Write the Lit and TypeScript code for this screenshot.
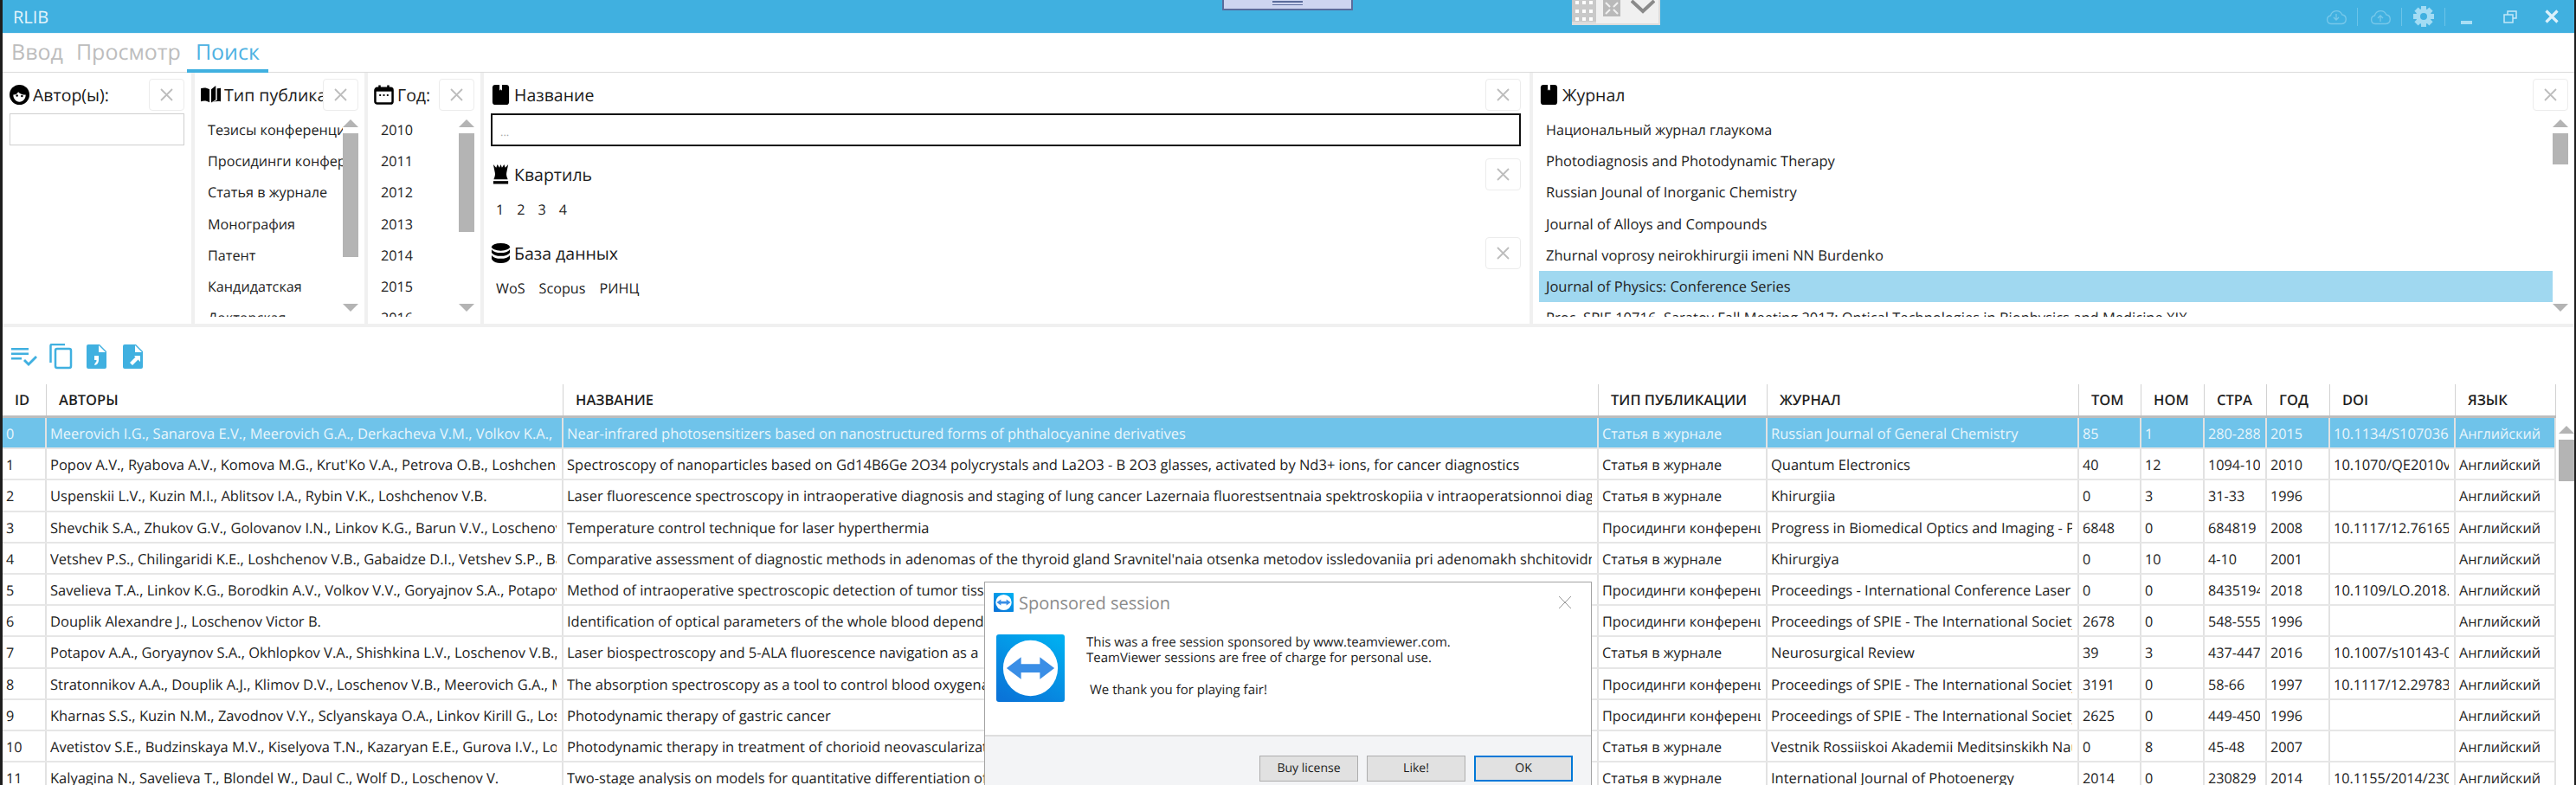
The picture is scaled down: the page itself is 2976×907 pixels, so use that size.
import {LitElement, html, css, svg} from 'lit';
import {customElement} from 'lit/decorators.js';

const TYPES = ['Тезисы конференции', 'Просидинги конференций', 'Статья в журнале', 'Монография', 'Патент', 'Кандидатская', 'Докторская'];
const YEARS = ['2010', '2011', '2012', '2013', '2014', '2015', '2016'];
const JOURNALS = [
    'Национальный журнал глаукома',
    'Photodiagnosis and Photodynamic Therapy',
    'Russian Jounal of Inorganic Chemistry',
    'Journal of Alloys and Compounds',
    'Zhurnal voprosy neirokhirurgii imeni NN Burdenko',
    'Journal of Physics: Conference Series',
    'Proc. SPIE 10716, Saratov Fall Meeting 2017: Optical Technologies in Biophysics and Medicine XIX',
];
const COLUMNS = ['ID', 'АВТОРЫ', 'НАЗВАНИЕ', 'ТИП ПУБЛИКАЦИИ', 'ЖУРНАЛ', 'ТОМ', 'НОМ', 'СТРА', 'ГОД', 'DOI', 'ЯЗЫК'];
const ARTICLE = 'Статья в журнале';
const PROC = 'Просидинги конференций';
const SPIE = 'Proceedings of SPIE - The International Society for Optical Engineering';
const ROWS = [
    ['0', 'Meerovich I.G., Sanarova E.V., Meerovich G.A., Derkacheva V.M., Volkov K.A., Negrimovsky V.M.', 'Near-infrared photosensitizers based on nanostructured forms of phthalocyanine derivatives', ARTICLE, 'Russian Journal of General Chemistry', '85', '1', '280-288', '2015', '10.1134/S1070363215020036'],
    ['1', "Popov A.V., Ryabova A.V., Komova M.G., Krut'Ko V.A., Petrova O.B., Loshchenov V.B.", 'Spectroscopy of nanoparticles based on Gd14B6Ge 2O34 polycrystals and La2O3 - B 2O3 glasses, activated by Nd3+ ions, for cancer diagnostics', ARTICLE, 'Quantum Electronics', '40', '12', '1094-1098', '2010', '10.1070/QE2010v040n12'],
    ['2', 'Uspenskii L.V., Kuzin M.I., Ablitsov I.A., Rybin V.K., Loshchenov V.B.', 'Laser fluorescence spectroscopy in intraoperative diagnosis and staging of lung cancer Lazernaia fluorestsentnaia spektroskopiia v intraoperatsionnoi diagnostike', ARTICLE, 'Khirurgiia', '0', '3', '31-33', '1996', ''],
    ['3', 'Shevchik S.A., Zhukov G.V., Golovanov I.N., Linkov K.G., Barun V.V., Loschenov V.B.', 'Temperature control technique for laser hyperthermia', PROC, 'Progress in Biomedical Optics and Imaging - Proceedings of SPIE', '6848', '0', '684819', '2008', '10.1117/12.761650'],
    ['4', 'Vetshev P.S., Chilingaridi K.E., Loshchenov V.B., Gabaidze D.I., Vetshev S.P., Bannikov A.', "Comparative assessment of diagnostic methods in adenomas of the thyroid gland Sravnitel'naia otsenka metodov issledovaniia pri adenomakh shchitovidnoi", ARTICLE, 'Khirurgiya', '0', '10', '4-10', '2001', ''],
    ['5', 'Savelieva T.A., Linkov K.G., Borodkin A.V., Volkov V.V., Goryajnov S.A., Potapov A.A.', 'Method of intraoperative spectroscopic detection of tumor tissue', PROC, 'Proceedings - International Conference Laser', '0', '0', '8435194', '2018', '10.1109/LO.2018.8435194'],
    ['6', 'Douplik Alexandre J., Loschenov Victor B.', 'Identification of optical parameters of the whole blood dependence', PROC, SPIE, '2678', '0', '548-555', '1996', ''],
    ['7', 'Potapov A.A., Goryaynov S.A., Okhlopkov V.A., Shishkina L.V., Loschenov V.B., Savelieva T.A.', 'Laser biospectroscopy and 5-ALA fluorescence navigation as a', ARTICLE, 'Neurosurgical Review', '39', '3', '437-447', '2016', '10.1007/s10143-016-0'],
    ['8', 'Stratonnikov A.A., Douplik A.J., Klimov D.V., Loschenov V.B., Meerovich G.A., Meerovich I.G.', 'The absorption spectroscopy as a tool to control blood oxygenation', PROC, SPIE, '3191', '0', '58-66', '1997', '10.1117/12.297832'],
    ['9', 'Kharnas S.S., Kuzin N.M., Zavodnov V.Y., Sclyanskaya O.A., Linkov Kirill G., Loschenov V.B.', 'Photodynamic therapy of gastric cancer', PROC, SPIE, '2625', '0', '449-450', '1996', ''],
    ['10', 'Avetistov S.E., Budzinskaya M.V., Kiselyova T.N., Kazaryan E.E., Gurova I.V., Loschenov V.B.', 'Photodynamic therapy in treatment of chorioid neovascularization', ARTICLE, 'Vestnik Rossiiskoi Akademii Meditsinskikh Nauk', '0', '8', '45-48', '2007', ''],
    ['11', 'Kalyagina N., Savelieva T., Blondel W., Daul C., Wolf D., Loschenov V.', 'Two-stage analysis on models for quantitative differentiation of', ARTICLE, 'International Journal of Photoenergy', '2014', '0', '230829', '2014', '10.1155/2014/230829'],
];

const faceIcon = svg`<circle cx="12" cy="12" r="12" fill="#000"/><path d="M4.500 12c3 0 5-1.500 6-3.500 2 2.300 5.500 3.500 9 3.500 0 4.800-3.200 8.500-7.500 8.500S4.500 16.800 4.500 12z" fill="#fff"/><circle cx="9" cy="13" r="1.300"/><circle cx="15" cy="13.500" r="1.300"/>`;
const bookIcon = svg`<path d="M0 4.500c3.500-1.300 7-1 10.500 1V21c-3.500-2-7-2.300-10.500-1z"/><path d="M12.500 5.500 18 1v17l-5.500 3.500z"/><path d="M19.500 4.500 24 4v16c-3.500-.6-7-.3-10 1l5.500-2.500z"/>`;
const calendarIcon = svg`<rect x="1.500" y="4" width="21" height="18.500" rx="2.500" fill="#fff" stroke="#000" stroke-width="2.600"/><rect x="1.500" y="4" width="21" height="4" fill="#000"/><rect x="5.500" y="0.500" width="2.600" height="5"/><rect x="15.900" y="0.500" width="2.600" height="5"/><rect x="6.500" y="11.500" width="2" height="2"/><rect x="11" y="11.500" width="2" height="2"/><rect x="15.500" y="11.500" width="2" height="2"/>`;
const bookmarkIcon = svg`<rect x="2" y="0" width="20" height="24" rx="3.500"/><path d="M10.500 0h3v7l-1.500-1.500L10.500 7z" fill="#fff"/>`;
const queenIcon = svg`<path d="M3 0l3.500 4L8 0l2.500 4L12 0l1.500 4L16 0l1.500 4L21 0l-2 10c-.5 2.500 0 4.500 1.500 8h-17c1.500-3.500 2-5.500 1.500-8z"/><rect x="3" y="20" width="18" height="3.500"/>`;
const dbIcon = svg`<ellipse cx="12" cy="4.500" rx="11" ry="4.500"/><path d="M1 7.500c2 3 6 4 11 4s9-1 11-4v4c-2 3-6 4-11 4s-9-1-11-4z"/><path d="M1 14.500c2 3 6 4 11 4s9-1 11-4v4.500c-2 3.500-6 5-11 5s-9-1.500-11-5z"/>`;

@customElement('app-root')
export class AppRoot extends LitElement {
    static styles = css`
        :host {
            display: block;
            width: 2976px;
            height: 907px;
            overflow: hidden;
            background: #fff;
            color: #222;
            font-family: 'Open Sans', 'Noto Sans', sans-serif;
            font-size: 16.200px;
            text-rendering: geometricPrecision;
        }

        .lat { font-size: 16.500px; }

        .app {
            position: relative;
            height: 907px;
            box-sizing: border-box;
            border-left: 3px solid #1e1e1e;
            border-right: 2px solid #1e1e1e;
            display: flex;
            flex-direction: column;
            overflow: hidden;
        }

        .titlebar {
            height: 38px;
            flex: none;
            background: #40b0e0;
            display: flex;
            align-items: center;
            padding-left: 12px;
            color: #e4f4fb;
            font-size: 20px;
            border-bottom: 1px solid #e8f4fa;
            box-sizing: content-box;
        }

        .win-icons {
            margin-left: auto;
            display: flex;
            align-items: center;
            height: 38px;
            padding-right: 18px;
        }

        .win-icons svg { display: block; flex: none; }
        .win-sep { width: 1px; height: 21px; background: #6cc3e8; flex: none; }

        .tv-top {
            position: absolute;
            left: 1409px;
            top: 0;
            width: 147px;
            height: 10px;
            background: #cdd5f0;
            border: 2px solid #5a6c9c;
            border-top: none;
            display: flex;
            justify-content: center;
        }

        .tv-top i {
            display: block;
            width: 35px;
            height: 5px;
            margin-top: 1px;
            border-top: 2px solid #5a6c9c;
            border-bottom: 1px solid #5a6c9c;
            box-sizing: border-box;
        }

        .tv-bar {
            position: absolute;
            left: 1813px;
            top: 0;
            width: 102px;
            height: 29px;
            background: #dcdcdc;
            display: flex;
            box-sizing: border-box;
            padding-bottom: 2px;
            padding-right: 2px;
        }

        .tv-grip {
            width: 28px;
            background: #c9c9c9;
            display: grid;
            grid-template-columns: repeat(3, 4px);
            gap: 4px;
            padding: 0 4px;
            height: 25px;
            box-sizing: border-box;
            flex: none;
        }

        .tv-grip b { background: #fff; height: 4px; display: block; margin-top: 1px; }

        .tv-rest {
            flex: 1;
            background: #f0f0f0;
            display: flex;
            gap: 12px;
            padding-left: 8px;
        }

        .tabs {
            height: 45px;
            flex: none;
            box-sizing: border-box;
            display: flex;
            border-bottom: 1px solid #dcdcdc;
            padding-left: 3px;
            color: #bdbdbd;
            font-size: 25px;
        }

        .tab {
            padding: 0 7px;
            margin-right: 1px;
            height: 44px;
            line-height: 42px;
            box-sizing: border-box;
        }

        .tab.active {
            color: #4fb2e2;
            border-bottom: 4px solid #40b0e0;
            padding: 0 10px;
            margin-left: -1px;
            height: 45px;
            margin-bottom: -1px;
        }

        .filters {
            height: 294px;
            flex: none;
            display: grid;
            grid-template-columns: 218px 196px 130px 1208px 1203px;
            gap: 4px;
            background: #f0f0f0;
            padding-bottom: 4px;
            box-sizing: border-box;
        }

        .panel {
            background: #fff;
            padding: 7px 8px 0;
            min-width: 0;
            overflow: hidden;
            display: flex;
            flex-direction: column;
        }

        .panel.tight { padding-left: 7px; padding-right: 7px; }
        .panel.name { padding-right: 10px; }

        .head {
            display: flex;
            align-items: center;
            height: 37px;
            flex: none;
            font-size: 19.500px;
            color: #1a1a1a;
        }

        .head svg { width: 23px; height: 23px; flex: none; margin-right: 4px; }

        .head-title {
            flex: 1;
            min-width: 0;
            overflow: hidden;
            white-space: nowrap;
        }

        .clear {
            width: 41px;
            height: 37px;
            flex: none;
            box-sizing: border-box;
            border: 1.500px solid #ececec;
            border-radius: 4px;
            color: #bdbdbd;
            display: flex;
            align-items: center;
            justify-content: center;
        }

        .clear svg { width: 15px; height: 15px; margin: 0; }

        .input {
            height: 37px;
            margin-top: 3px;
            flex: none;
            border: 1px solid #cfcfcf;
            box-sizing: border-box;
        }

        .input.focus {
            border: 2px solid #111;
            color: #aaa;
            font-size: 13px;
            padding: 10px 0 0 9px;
            height: 38px;
        }

        .subhead { margin-top: 14px; }

        .chips {
            display: flex;
            gap: 15px;
            height: 24px;
            line-height: 24px;
            margin: 10px 0 20px 6px;
        }

        .chips.wide { gap: 16px; margin-bottom: 0; }

        .list-wrap {
            display: flex;
            flex: 1;
            min-height: 0;
            margin-top: 4px;
        }

        .list {
            flex: 1;
            min-width: 0;
            overflow: hidden;
            height: 234px;
        }

        .item {
            height: 36.2px;
            line-height: 36px;
            padding-left: 8px;
            white-space: nowrap;
        }

        .item.selected { background: #a0d8f0; }

        .bar {
            width: 18px;
            flex: none;
            display: flex;
            flex-direction: column;
            align-items: center;
            box-sizing: border-box;
            padding: 6px 0 14px;
        }

        .up, .down {
            width: 0;
            height: 0;
            flex: none;
            border-left: 9px solid transparent;
            border-right: 9px solid transparent;
        }

        .up { border-bottom: 9px solid #b4b4b4; }
        .down { border-top: 9px solid #b4b4b4; margin-top: auto; }
        .thumb { width: 100%; background: #b4b4b4; margin-top: 7px; flex: none; }

        .toolbar {
            height: 66px;
            flex: none;
            display: flex;
            gap: 14px;
            padding: 19px 0 0 10px;
            box-sizing: border-box;
            color: #40b0e0;
        }

        .toolbar svg { display: block; flex: none; }

        .grid-wrap {
            flex: 1;
            min-height: 0;
            display: flex;
        }

        .table {
            width: 2950px;
            flex: none;
            --cols: 51px 597px 1196px 195px 360px 72px 73px 72px 73px 145px 116px;
        }

        .thead {
            display: grid;
            grid-template-columns: var(--cols);
            height: 39px;
            border-bottom: 3px solid #bdbdbd;
            box-sizing: border-box;
        }

        .th {
            font-weight: 600;
            font-size: 16.500px;
            line-height: 36px;
            padding-left: 14px;
            color: #1f1f1f;
            border-right: 1px solid #d2d2d2;
            white-space: nowrap;
            overflow: hidden;
        }

        .row {
            display: grid;
            grid-template-columns: var(--cols);
            height: 36.2px;
            box-sizing: border-box;
            border-bottom: 2px solid #e6e6e6;
        }

        .row.selected { background: #6fc3ea; color: #e9f6fc; }

        .td {
            border-right: 2px solid #e2e2e2;
            padding: 2px 6px 0 4px;
            line-height: 32px;
            min-width: 0;
        }

        .clip { overflow: hidden; white-space: nowrap; }

        .grid-bar {
            width: 18px;
            margin-left: 3px;
            flex: none;
            display: flex;
            flex-direction: column;
            align-items: center;
            padding-top: 48px;
        }

        .grid-bar .thumb { height: 48px; margin-top: 7px; }

        .dialog {
            position: absolute;
            left: 1134px;
            top: 672px;
            width: 702px;
            height: 240px;
            background: #fff;
            border: 1px solid #a3a3a3;
            box-sizing: border-box;
            display: flex;
            flex-direction: column;
            color: #1c1c1c;
            font-size: 15px;
        }

        .dlg-title {
            height: 46px;
            flex: none;
            display: flex;
            align-items: center;
            padding: 0 16px 0 10px;
            color: #8b8b8b;
            font-size: 20px;
        }

        .dlg-title svg { flex: none; display: block; margin-right: 6px; }
        .dlg-close { margin-left: auto; margin-right: 0; }

        .dlg-body {
            height: 130px;
            flex: none;
            box-sizing: border-box;
            display: flex;
            padding: 14px 0 0 13px;
            line-height: 18px;
        }

        .dlg-logo { flex: none; display: block; margin-right: 25px; }
        .dlg-text p { margin: 0; }
        .dlg-text .thanks { margin: 19px 0 0 4px; }

        .dlg-foot {
            flex: 1;
            background: #f3f4f6;
            border-top: 2px solid #dedede;
            display: flex;
            justify-content: flex-end;
            gap: 10px;
            padding: 22px 21px 0 0;
        }

        .btn {
            width: 114px;
            height: 30px;
            box-sizing: border-box;
            background: #e1e1e1;
            border: 1px solid #adadad;
            font-size: 14px;
            text-align: center;
            line-height: 28px;
        }

        .btn.primary {
            border: 2px solid #0078d7;
            line-height: 26px;
        }
    `;

    // latin text runs narrower than the original ui font, so it gets a larger size
    private latClass(text: string) {
        return /[A-Za-z]/.test(text) && !/[А-Яа-я]/.test(text) ? 'lat' : '';
    }

    private glyph(body: unknown) {
        return html`<svg viewBox="0 0 24 24" fill="#000">${body}</svg>`;
    }

    private clearBtn() {
        return html`<div class="clear"><svg viewBox="0 0 15 15"><path d="M1 1l13 13M14 1L1 14" stroke="currentColor" stroke-width="1.800" fill="none"/></svg></div>`;
    }

    private head(icon: unknown, title: string) {
        return html`<div class="head">${this.glyph(icon)}<div class="head-title">${title}</div>${this.clearBtn()}</div>`;
    }

    private listPanel(items: string[], thumb: number, selected = -1) {
        return html`
            <div class="list-wrap">
                <div class="list">
                    ${items.map((t, i) => html`<div class="item ${this.latClass(t)} ${i === selected ? 'selected' : ''}">${t}</div>`)}
                </div>
                <div class="bar">
                    <div class="up"></div>
                    <div class="thumb" style="height: ${thumb}px"></div>
                    <div class="down"></div>
                </div>
            </div>
        `;
    }

    private cloud(arrowUp: boolean) {
        const arrow = arrowUp ? 'M12 18v-7M9 14l3-3 3 3' : 'M12 9v7M9 13l3 3 3-3';
        return html`<svg width="24" height="24" viewBox="0 0 24 24" fill="none" stroke="#77c8ea" stroke-width="1.300">
            <path d="M6 20.500a4.800 4.800 0 0 1-.5-9.500 7 7 0 0 1 13.300-1 5.300 5.300 0 0 1-.3 10.500z"/>
            <path d=${arrow}/>
        </svg>`;
    }

    private gear() {
        const teeth = [0, 45, 90, 135, 180, 225, 270, 315];
        return html`<svg width="24" height="24" viewBox="0 0 24 24" fill="#a3dcf4">
            ${teeth.map((a) => svg`<rect x="9" y="0" width="6" height="6" transform="rotate(${a} 12 12)"/>`)}
            <circle cx="12" cy="12" r="6.500" fill="none" stroke="#a3dcf4" stroke-width="5"/>
        </svg>`;
    }

    private winIcons() {
        return html`
            <div class="win-icons">
                ${this.cloud(false)}
                <div class="win-sep" style="margin: 0 14px 0 12px"></div>
                ${this.cloud(true)}
                <div class="win-sep" style="margin: 0 13px 0 12px"></div>
                ${this.gear()}
                <div class="win-sep" style="margin: 0 18px 0 12px"></div>
                <svg width="14" height="6" style="margin-top: 14px"><rect width="13" height="4" y="1" fill="#a9dff5"/></svg>
                <svg width="16" height="15" viewBox="0 0 16 15" style="margin-left: 35px" fill="none" stroke="#c3e7f7" stroke-width="1.500">
                    <rect x="1" y="5" width="10" height="9"/><path d="M5 5V1h10v8h-4"/>
                </svg>
                <svg width="16" height="16" viewBox="0 0 16 16" style="margin-left: 32px" stroke="#dbf1fb" stroke-width="3.200">
                    <path d="M1.500 1.500l13 13M14.500 1.500l-13 13"/>
                </svg>
            </div>
        `;
    }

    private tvLogo(w: number, h: number, mini: boolean) {
        return html`<svg class="dlg-logo" width=${w} height=${h} viewBox="0 0 80 80" preserveAspectRatio="none" style=${mini ? 'margin-right: 6px' : ''}>
            <defs>
                <linearGradient id="tvg" x1="0.800" y1="0" x2="0.200" y2="1">
                    <stop offset="0" stop-color="#00aef0"/><stop offset="1" stop-color="#0a74d8"/>
                </linearGradient>
            </defs>
            <rect width="80" height="80" rx="3" fill="url(#tvg)"/>
            <ellipse cx="40" cy="40" rx="32" ry="33" fill="#fff"/>
            <path d="M12 40l17-13v8h22v-8l17 13-17 13v-8H29v8z" fill="#3a8ee6"/>
        </svg>`;
    }

    private dialog() {
        return html`
            <div class="dialog">
                <div class="dlg-title">
                    ${this.tvLogo(23, 22, true)}
                    Sponsored session
                    <svg class="dlg-close" width="16" height="16" viewBox="0 0 16 16"><path d="M1 1l14 14M15 1L1 15" stroke="#9a9a9a" stroke-width="1" fill="none"/></svg>
                </div>
                <div class="dlg-body">
                    ${this.tvLogo(79, 78, false)}
                    <div class="dlg-text">
                        <p>This was a free session sponsored by www.teamviewer.com.</p>
                        <p>TeamViewer sessions are free of charge for personal use.</p>
                        <p class="thanks">We thank you for playing fair!</p>
                    </div>
                </div>
                <div class="dlg-foot">
                    <div class="btn">Buy license</div>
                    <div class="btn">Like!</div>
                    <div class="btn primary">OK</div>
                </div>
            </div>
        `;
    }

    render() {
        return html`
            <div class="app">
                <div class="titlebar">RLIB${this.winIcons()}</div>
                <div class="tv-top"><i></i></div>
                <div class="tv-bar">
                    <div class="tv-grip">${Array.from({length: 9}).map(() => html`<b></b>`)}</div>
                    <div class="tv-rest">
                        <svg width="20" height="19" viewBox="0 0 20 19" fill="none" stroke="#8e8e8e" stroke-width="2"><path d="M0 0h20v19H0z" fill="#b9b9b9" stroke="none"/><path d="M3 3l5 5M17 3l-5 5M3 16l5-5M17 16l-5-5" stroke="#f0f0f0"/></svg>
                        <svg width="28" height="16" viewBox="0 0 28 16" fill="none" stroke="#8a8a8a" stroke-width="4"><path d="M1 1l13 12L27 1"/></svg>
                    </div>
                </div>
                <div class="tabs">
                    <div class="tab">Ввод</div>
                    <div class="tab">Просмотр</div>
                    <div class="tab active">Поиск</div>
                </div>
                <div class="filters">
                    <div class="panel">
                        ${this.head(faceIcon, 'Автор(ы):')}
                        <div class="input"></div>
                    </div>
                    <div class="panel tight">
                        ${this.head(bookIcon, 'Тип публикации')}
                        ${this.listPanel(TYPES, 143)}
                    </div>
                    <div class="panel tight">
                        ${this.head(calendarIcon, 'Год:')}
                        ${this.listPanel(YEARS, 114)}
                    </div>
                    <div class="panel name">
                        ${this.head(bookmarkIcon, 'Название')}
                        <div class="input focus">...</div>
                        <div class="subhead">${this.head(queenIcon, 'Квартиль')}</div>
                        <div class="chips">${['1', '2', '3', '4'].map((v) => html`<span>${v}</span>`)}</div>
                        ${this.head(dbIcon, 'База данных')}
                        <div class="chips wide">${['WoS', 'Scopus', 'РИНЦ'].map((v) => html`<span>${v}</span>`)}</div>
                    </div>
                    <div class="panel tight">
                        ${this.head(bookmarkIcon, 'Журнал')}
                        ${this.listPanel(JOURNALS, 36, 5)}
                    </div>
                </div>
                <div class="toolbar">
                    <svg width="30" height="30" viewBox="0 0 30 30" fill="#40b0e0"><rect y="5" width="20" height="2.500"/><rect y="10.500" width="20" height="2.500"/><rect y="16" width="12" height="2.500"/><path d="M14 20l2-2 4 4 8-8 2 2-10 10z"/></svg>
                    <svg width="27" height="30" viewBox="0 0 27 30" fill="none" stroke="#40b0e0" stroke-width="2.500"><path d="M1.500 22V2.500A1.500 1.500 0 0 1 3 1h15"/><rect x="7" y="6" width="18" height="22" rx="2"/></svg>
                    <svg width="24" height="30" viewBox="0 0 24 30" fill="#40b0e0" style="margin-left: 2px"><path d="M2 1h13l8 8v18a2 2 0 0 1-2 2H2a2 2 0 0 1-2-2V3a2 2 0 0 1 2-2z"/><path d="M14 2v8h8z" fill="#fff"/><path d="M9 14h5v5c0 3-2 6-5 6l1-3c1 0 1.500-1 1.500-3H9z" fill="#fff"/></svg>
                    <svg width="24" height="30" viewBox="0 0 24 30" fill="#40b0e0" style="margin-left: 4px"><path d="M2 1h13l8 8v18a2 2 0 0 1-2 2H2a2 2 0 0 1-2-2V3a2 2 0 0 1 2-2z"/><path d="M14 2v8h8z" fill="#fff"/><path d="M13 14h7v7l-2.500-2.500L11 25l-3-3 6.500-6.500z" fill="#fff"/></svg>
                </div>
                <div class="grid-wrap">
                    <div class="table">
                        <div class="thead">${COLUMNS.map((c) => html`<div class="th">${c}</div>`)}</div>
                        ${ROWS.map((r, i) => html`
                            <div class="row ${i === 0 ? 'selected' : ''}">
                                ${[...r, 'Английский'].map((v) => html`<div class="td"><div class="clip ${this.latClass(v)}">${v}</div></div>`)}
                            </div>
                        `)}
                    </div>
                    <div class="grid-bar">
                        <div class="up"></div>
                        <div class="thumb"></div>
                    </div>
                </div>
                ${this.dialog()}
            </div>
        `;
    }
}
